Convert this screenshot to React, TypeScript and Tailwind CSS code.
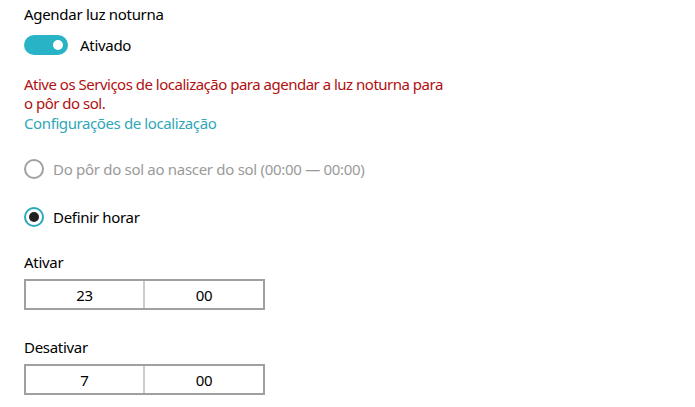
import { useState } from 'react';

function Radio({ checked, disabled, label }: { checked?: boolean; disabled?: boolean; label: string }) {
  return (
    <div className="flex items-center h-5">
      <span
        className={`flex items-center justify-center w-5 h-5 rounded-full border-2 ${
          disabled ? 'border-[#a0a0a0]' : 'border-[#2ba9bb]'
        }`}
      >
        {checked && <span className="w-[10px] h-[10px] rounded-full bg-[#222]" />}
      </span>
      <span className={`ml-[9px] ${disabled ? 'text-[#9a9a9a]' : 'text-black'}`}>{label}</span>
    </div>
  );
}

function TimeBox({ hour, minute }: { hour: string; minute: string }) {
  return (
    <div className="mt-[7px] flex w-[241px] h-[31px] border-2 border-[#a0a0a0] bg-white">
      <div className="w-[119px] flex items-center justify-center border-r-2 border-[#cccccc]">{hour}</div>
      <div className="flex-1 flex items-center justify-center">{minute}</div>
    </div>
  );
}

export default function App() {
  const [on, setOn] = useState(true);

  return (
    <div className="w-[695px] h-[407px] bg-white pl-6 pt-[4px] text-[15px] leading-5 text-black font-['Noto_Sans',sans-serif] tracking-[-0.3px]">
      <div>Agendar luz noturna</div>

      {/* Toggle */}
      <div className="mt-[11px] flex items-center h-5">
        <button
          onClick={() => setOn(!on)}
          className={`w-[44px] h-5 rounded-full flex items-center px-[5px] ${
            on ? 'bg-[#29b3c6] justify-end' : 'bg-gray-300 justify-start'
          }`}
        >
          <span className="w-[10px] h-[10px] rounded-full bg-white" />
        </button>
        <span className="ml-3">{on ? 'Ativado' : 'Desativado'}</span>
      </div>

      <p className="mt-5 w-[424px] text-[#b01010] leading-[19px] tracking-[-0.5px]">
        Ative os Serviços de localização para agendar a luz noturna para o pôr do sol.
      </p>
      <a className="block text-[#2fa7b8] tracking-[-0.4px]">Configurações de localização</a>

      <div className="mt-[26px]">
        <Radio disabled label="Do pôr do sol ao nascer do sol (00:00 — 00:00)" />
      </div>
      <div className="mt-[28px]">
        <Radio checked label="Definir horar" />
      </div>

      <div className="mt-[25px]">Ativar</div>
      <TimeBox hour="23" minute="00" />

      <div className="mt-[27px]">Desativar</div>
      <TimeBox hour="7" minute="00" />
    </div>
  );
}
